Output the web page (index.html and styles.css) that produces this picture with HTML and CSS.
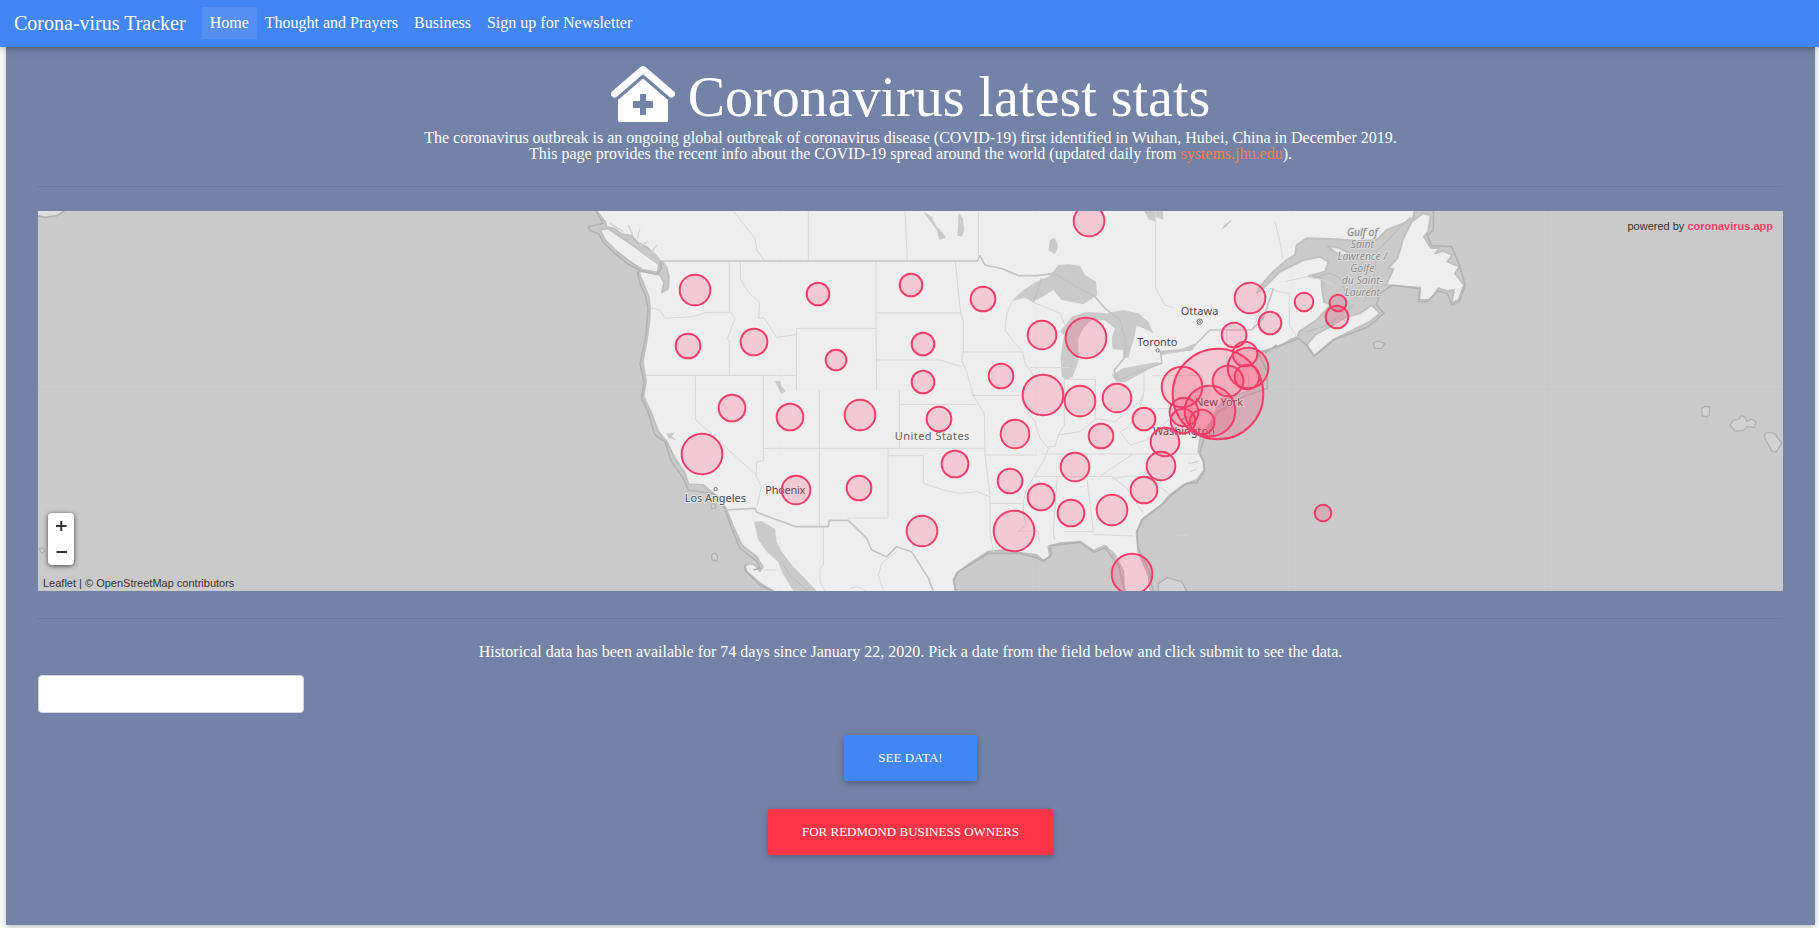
FILE: index.html
```
<!DOCTYPE html>
<html lang="en">
<head>
<meta charset="utf-8">
<title>Corona-virus Tracker</title>
<link rel="stylesheet" href="styles.css">
</head>
<body>
<nav class="navbar">
  <a class="brand">Corona-virus Tracker</a>
  <a class="nav-link active">Home</a>
  <a class="nav-link">Thought and Prayers</a>
  <a class="nav-link">Business</a>
  <a class="nav-link">Sign up for Newsletter</a>
</nav>
<main class="panel">
  <h1 class="title">
    <svg class="house" viewBox="0 0 64 56"><path d="M3.500 28 32 3.500 60.500 28" fill="none" stroke="#fff" stroke-width="7" stroke-linecap="round" stroke-linejoin="round"/><path fill="#fff" fill-rule="evenodd" d="M32 12.500 57 34V54.500Q57 56 55.500 56H8.500Q7 56 7 54.500V34ZM29 28V35H22V42H29V49H35V42H42V35H35V28Z"/></svg>
    <span>Coronavirus latest stats</span>
  </h1>
  <p class="lead">The coronavirus outbreak is an ongoing global outbreak of coronavirus disease (COVID-19) first identified in Wuhan, Hubei, China in December 2019.<br>This page provides the recent info about the COVID-19 spread around the world (updated daily from <a class="source">systems.jhu.edu</a>).</p>
  <hr class="rule">
  <section class="map">
    <svg class="map-canvas" viewBox="-1566 18 5235 1140">
      <g class="land">
        <path d="M95 -10 110 18 135 50 140 66 165 72 185 88 215 92 232 112 262 128 285 150 300 168 318 182 326 215 324 250 306 262 312 232 302 212 290 206 240 198 238 208 252 240 266 275 270 310 268 350 258 420 248 470 258 530 250 575 272 620 295 680 320 710 345 760 375 805 385 838 430 840 455 862 480 880 500 915 520 965 545 1020 590 1055 608 1085 600 1098 585 1080 568 1075 553 1083 560 1100 600 1135 640 1158V1190H1188L1183 1130 1190 1105 1230 1075 1285 1040 1330 1035 1390 1045 1430 1050 1450 1067 1470 1055 1465 1025 1500 1015 1560 1010 1600 1037 1635 1022 1665 1050 1690 1100 1692 1190H1775L1765 1110 1735 1040 1730 985 1745 945 1800 905 1830 870 1870 840 1910 825 1933 795 1930 770 1915 740 1920 700 1960 640 1970 610 2000 580 2060 560 2110 535 2085 490 2100 440 2150 430 2190 405 2213 395 2218 380 2270 345 2312 300 2292 290 2286 250 2285 220 2245 214 2295 200 2306 170 2280 155 2230 165 2160 200 2110 250 2092 262 2100 245 2135 205 2180 165 2205 150 2210 120 2240 100 2310 102 2400 108 2450 105 2480 75 2530 55 2560 38 2568 -10Z"/>
        <path d="M120 75 145 70 185 98 225 125 265 155 298 178 292 203 250 195 210 170 165 135 135 105Z"/>
        <path d="M2240 420 2265 390 2310 365 2360 335 2400 325 2435 300 2460 325 2430 350 2380 375 2320 405 2262 452ZM2302 122 2335 128 2380 150 2395 165 2365 160 2325 142Z"/>
        <path d="M2325 306 2345 315 2370 312 2380 300 2365 318 2340 322Z"/>
        <path d="M2555 50 2588 25 2612 30 2605 80 2592 95 2612 128 2640 130 2625 145 2650 138 2678 150 2662 170 2698 185 2685 205 2712 240 2695 285 2675 295 2682 255 2662 258 2635 250 2610 285 2578 285 2580 248 2510 243 2478 240 2500 192 2485 190 2512 160 2530 100Z"/>
        <path class="isle" d="M2440 415 2455 408 2475 415 2465 430 2445 430ZM3425 610 3435 604 3449 606 3448 630 3440 636 3426 632ZM3510 660 3520 645 3535 643 3545 632 3555 637 3560 650 3575 642 3588 652 3582 668 3562 664 3550 677 3525 678ZM3615 685 3630 682 3645 686 3665 715 3648 742 3635 738 3614 698ZM455 1050 465 1044 473 1055 470 1068 456 1064ZM1795 1168V1135L1822 1118 1865 1130 1885 1168ZM453 895 465 898 467 910 455 910ZM-1562 1032 -1552 1028 -1546 1038 -1554 1045ZM-1510 1052 -1498 1042 -1492 1048 -1504 1062Z"/>
        <path class="plain" d="M-1580 0V30L-1545 37-1510 32-1480 14V0Z"/>
      </g>
      <g class="water">
        <path d="M582 950 605 948 645 972 650 1010 665 1040 700 1085 730 1115 770 1158H700L668 1105 655 1072 620 1040 595 1005ZM645 528 660 528 665 545 678 558 665 567 655 550ZM385 838 425 840 430 860 395 865ZM1090 20 1115 35 1130 65 1142 75 1158 98 1138 104 1130 75 1110 48ZM1195 22 1208 40 1213 75 1205 95 1192 92 1195 50ZM1470 105 1485 98 1495 125 1485 148 1465 135ZM1355 288 1390 255 1430 230 1470 212 1495 180 1525 178 1560 182 1575 210 1608 230 1612 270 1590 285 1570 298 1540 292 1505 285 1480 255 1440 280 1415 290 1395 278ZM1505 515 1502 460 1512 390 1500 380 1535 335 1580 320 1640 325 1690 315 1735 325 1765 350 1780 385 1750 370 1730 362 1722 400 1705 458 1688 458 1690 435 1658 432 1655 400 1665 370 1632 345 1595 345 1570 370 1555 400 1555 470 1538 515 1520 525ZM1655 510 1690 490 1740 480 1800 470 1790 480 1745 505 1695 532 1670 530ZM1795 440 1870 430 1905 415 1900 435 1835 445 1805 450ZM1748 10 1765 42 1785 50 1790 35 1810 45 1808 10ZM1976 92 1992 60 2018 42 2000 64 1985 75Z"/>
        <path d="M228 112 255 130 280 142 305 172 295 180 258 152 232 130ZM320 685 345 683 335 694 350 705 325 700ZM2215 395 2270 352 2320 320 2350 325 2295 365 2258 385 2240 405Z"/>
        <path class="inlets" d="M150 55 190 80M205 60 218 90M240 70 232 100M265 110 240 122M290 120 275 140M322 190 310 170M1880 990H1850M1885 775 1915 770M1890 800 1910 792M2088 265 2105 245"/>
      </g>
      <g class="shore">
        <path d="M102 10 130 55 85 65 90 76 118 88 130 112 165 145 205 178 245 198 290 208 305 190 300 170M240 200 232 202 240 235 256 270 264 310 258 390 248 440 240 475 252 530 245 580 264 620 285 690 315 710 335 770 370 820 385 855 460 866 495 912 515 970 540 1030 590 1068 600 1090 580 1095M556 1078 555 1095 600 1140 635 1158M1188 1158 1180 1125 1195 1100 1285 1045 1380 1045 1430 1058 1452 1070 1475 1048 1470 1022 1560 1012 1602 1042 1635 1028 1675 1080 1695 1158M1778 1158 1770 1105 1735 1030 1730 980 1750 940 1810 895 1835 870 1880 835 1910 833 1933 800 1932 770 1920 745 1930 705 1975 620 2050 575 2122 550 2122 500 2095 445 2190 410 2215 400 2240 420 2262 455 2320 405 2425 365 2472 325 2450 300 2460 265 2498 240 2580 252 2575 290 2600 290 2635 258 2662 265 2675 300 2698 290 2716 240 2698 180 2675 125 2615 122 2602 92 2620 75V10M2115 445 2150 420"/>
      </g>
      <g class="states">
        <path d="M520 18 570 82 585 100 590 135 612 166M745 18V166M1035 18 1042 166M1255 18V166M1787 18V250L1815 300 1840 308M508 170V320M541 170V220L565 262 599 292 596 340 612 338 650 397 700 390 709 388M270 308 300 315 315 340 395 335 440 322H510L525 340 503 400 508 412V510M258 511H709M709 555V370H948M948 170V370L950 555M950 324H1204M1186 170 1193 240 1203 330 1210 345V440L1205 465 1220 500 1240 572M950 465H1140L1170 475 1205 485M1205 441H1388M406 512V643L590 812M610 512V768L590 770 588 812 604 845 590 910M610 730H1273M778 555V965M1018 555V730M1018 598H1247M984 730V939H862M984 752H1090V835L1150 855 1200 865 1250 860 1290 875V980L1300 1040M1235 571H1380M1388 441 1395 475 1420 510 1405 540 1385 575 1395 610 1425 650 1440 700 1465 730 1450 770 1425 810 1400 850 1390 895V930L1400 960 1375 978H1435L1438 1010M1240 572 1260 605 1273 625 1275 750 1290 870M1273 750H1430M1293 895H1390M1355 290 1340 330 1335 375 1360 410 1390 440M1415 290 1500 325 1515 360M1410 488H1530M1513 523V660L1495 690 1485 725 1460 725M1513 523H1606V640M1495 690 1560 680 1610 640 1665 650 1700 620 1740 590 1752 560V500M1752 611H1925M1445 747H1918M1425 814H1655L1700 850 1750 925M1492 814 1480 980 1485 1005M1580 814 1600 980H1512M1600 988 1720 993M1655 820 1720 812 1765 822 1830 868M1620 814 1655 790 1715 750M1778 512H1925M1752 570 1735 620 1700 670 1680 680 1710 720 1760 705 1840 630M2000 370V480M2078 370 2130 250 2155 260 2188 265V360L2210 395M2175 230 2240 215 2290 225 2320 240M1925 520 1950 560 1930 600 1960 620M1994 510H2066V545M790 965 790 1080 780 1090 780 1130 795 1158M610 1095H650M870 1150 890 1145 920 1158M1010 1040 965 1075 955 1110 970 1158M2145 50 2160 110 2168 160"/>
        <path class="nation" d="M305 168H1252L1260 152 1275 180 1330 192 1375 212 1430 212 1482 205 1540 240 1605 275 1635 310 1680 345 1695 400 1696 455 1663 495 1670 525 1750 495 1805 475 1802 440 1890 435 1950 375H2075L2110 340 2140 250M495 915 585 910 590 922 708 965H805L808 946H865L920 1000 935 1035 980 1055 1010 1025 1055 1040 1105 1120 1120 1158M1420 292 1445 220"/>
        <path class="seaborder" d="M2552 35 2450 140 2440 240 2412 290M2260 220 2310 204 2340 220 2360 270M2240 380 2290 365 2340 335M665 1070 685 1105 705 1125 745 1158"/>
        <path class="seam" d="M-1566 553H3669M1428 18V1158M2194 18V1158M2962 18V1158M660 18V1158"/>
      </g>
      <g class="labels">
        <text x="374" y="892" textLength="184">Los Angeles</text><text x="616" y="867" textLength="120">Phoenix</text><text class="country" x="1004" y="705" textLength="224">United States</text><text x="1732" y="422" textLength="120">Toronto</text><text x="1862" y="331" textLength="113">Ottawa</text><text x="1905" y="602" textLength="144">New York</text><text x="1779" y="691" textLength="186">Washington</text>
        <g class="gulf"><text x="2407" y="92">Gulf of</text><text x="2407" y="128">Saint</text><text x="2407" y="164">Lawrence /</text><text x="2407" y="200">Golfe</text><text x="2407" y="236">du Saint-</text><text x="2407" y="272">Laurent</text></g>
        <circle cx="467" cy="852" r="5"/><circle cx="1793" cy="436" r="5"/><circle cx="1919" cy="350" r="8"/><circle cx="1919" cy="350" r="3"/><circle cx="1873" cy="648" r="8"/>
      </g>
      <g class="cases">
        <circle cx="405" cy="255" r="46"/><circle cx="774" cy="267" r="34"/><circle cx="384" cy="423" r="37"/><circle cx="582" cy="411" r="40"/><circle cx="828" cy="465" r="31"/><circle cx="516" cy="609" r="40"/><circle cx="690" cy="636" r="40"/><circle cx="900" cy="630" r="46"/><circle cx="426" cy="747" r="61"/><circle cx="708" cy="855" r="43"/><circle cx="897" cy="849" r="37"/>
        <circle cx="1587" cy="48" r="46"/><circle cx="1053" cy="240" r="34"/><circle cx="1269" cy="282" r="37"/><circle cx="1089" cy="417" r="34"/><circle cx="1446" cy="390" r="43"/><circle cx="1578" cy="399" r="61"/><circle cx="1089" cy="531" r="34"/><circle cx="1323" cy="513" r="37"/><circle cx="1449" cy="570" r="61"/><circle cx="1560" cy="588" r="46"/><circle cx="1671" cy="579" r="43"/><circle cx="1137" cy="642" r="37"/><circle cx="1365" cy="687" r="43"/><circle cx="1623" cy="693" r="37"/><circle cx="1752" cy="642" r="34"/><circle cx="1185" cy="777" r="40"/><circle cx="1350" cy="828" r="37"/><circle cx="1545" cy="786" r="43"/><circle cx="1443" cy="876" r="40"/><circle cx="1533" cy="924" r="40"/><circle cx="1656" cy="915" r="46"/><circle cx="1752" cy="855" r="40"/><circle cx="1086" cy="978" r="46"/><circle cx="1362" cy="978" r="61"/><circle cx="1716" cy="1107" r="61"/>
        <circle cx="2070" cy="279" r="46"/><circle cx="2130" cy="354" r="34"/><circle cx="2232" cy="291" r="28"/><circle cx="2334" cy="294" r="25"/><circle cx="2331" cy="336" r="34"/><circle cx="2022" cy="390" r="37"/><circle cx="2055" cy="447" r="37"/><circle cx="2064" cy="489" r="61"/><circle cx="2061" cy="516" r="37"/><circle cx="2004" cy="528" r="46"/><circle cx="1974" cy="567" r="136"/><circle cx="1866" cy="546" r="61"/><circle cx="1950" cy="618" r="76"/><circle cx="1872" cy="621" r="43"/><circle cx="1869" cy="648" r="37"/><circle cx="1926" cy="651" r="37"/><circle cx="1815" cy="711" r="43"/><circle cx="1803" cy="783" r="43"/><circle cx="2289" cy="924" r="25"/>
      </g>
    </svg>
    <div class="powered">powered by <b>coronavirus.app</b></div>
    <div class="zoom">
      <svg viewBox="0 0 26 26"><path d="M8 13H18.500M13.250 8V18"/></svg>
      <svg viewBox="0 0 26 26"><path d="M8.500 13H19"/></svg>
    </div>
    <div class="credit">Leaflet | © OpenStreetMap contributors</div>
  </section>
  <hr class="rule lower">
  <p class="history">Historical data has been available for 74 days since January 22, 2020. Pick a date from the field below and click submit to see the data.</p>
  <input class="date" type="text" aria-label="Date">
  <div class="actions">
    <button class="btn">SEE DATA!</button>
    <button class="btn danger">FOR REDMOND BUSINESS OWNERS</button>
  </div>
</main>
</body>
</html>
```
FILE: styles.css
```
* { box-sizing: border-box; }
body { margin: 0; height: 928px; overflow: hidden; background: #fff; color: #fff; font: 16px "Liberation Serif", "Times New Roman", serif; }
.navbar { position: relative; z-index: 2; display: flex; align-items: center; height: 47px; padding: 0 14px; background: #4285f4; box-shadow: 0 2px 5px rgba(0,0,0,.16), 0 2px 10px rgba(0,0,0,.12); }
.brand { font-size: 20px; margin-right: 16px; }
.nav-link { height: 32px; padding: 0 8px; line-height: 31px; margin-bottom: 1px; }
.nav-link.active { background: rgba(255,255,255,.1); }
.panel { height: 878px; margin: 0 4px 0 6px; padding: 18px 32px 0; background: #7283a7; box-shadow: 0 2px 5px rgba(0,0,0,.16), 0 2px 10px rgba(0,0,0,.12); }
.title { display: flex; justify-content: center; gap: 13px; height: 63px; margin: 0; font-size: 56px; font-weight: 400; line-height: 64px; white-space: nowrap; }
.house { width: 64px; height: 56px; margin-top: 1px; }
.lead { margin: 2px 0 0; line-height: 16px; text-align: center; }
.source { color: #ff7f50; }
.rule { height: 1px; margin: 24px 0; border: 0; background: #68799b; }
.rule.lower { margin-top: 27px; }
.map { position: relative; height: 380px; overflow: hidden; background: #cacaca; color: #333; font-family: "Liberation Sans", Arial, sans-serif; }
.map-canvas { display: block; width: 1745px; height: 380px; }
.land path { fill: #eee; stroke: #c0c0c0; stroke-width: 6; stroke-linejoin: round; }
.land .isle { fill: #d2d2d2; stroke: #b0b0b0; stroke-width: 4; }
.land .plain { fill: #dedede; stroke: #b2b2b2; stroke-width: 5; }
.water path { fill: #cacaca; }
.water .inlets { fill: none; stroke: #d2d2d2; stroke-width: 4; }
.shore path { fill: none; stroke: #b2b2b2; stroke-width: 5; stroke-linejoin: round; }
.states path { fill: none; stroke: #d7d7d7; stroke-width: 3; stroke-linejoin: round; }
.states .nation { stroke: #c3c3c3; stroke-width: 5; }
.states .seaborder { stroke: #b9b9b9; }
.states .seam { stroke: #000; stroke-opacity: .015; }
.labels text { fill: #4c4c4c; stroke: #eee; stroke-width: 5; paint-order: stroke; font: 33px "Noto Sans", sans-serif; }
.labels .country { fill: #666; }
.labels .gulf text { fill: #8c8c8c; stroke: #ddd; font-size: 31px; font-style: italic; text-anchor: middle; }
.labels circle { fill: #eee; stroke: #777; stroke-width: 3; }
.cases circle { fill: #ff3d6a; fill-opacity: .2; stroke: #ff3d6a; stroke-width: 6; }
.powered { position: absolute; top: 8px; right: 10px; font-size: 11px; line-height: 14px; }
.powered b { color: #ff3d6a; }
.zoom { position: absolute; left: 10px; top: 302px; display: grid; grid-template-rows: 26px 26px; width: 26px; border-radius: 4px; background: #fff; box-shadow: 0 1px 5px rgba(0,0,0,.65); }
.zoom svg { width: 26px; height: 26px; fill: none; stroke: #333; stroke-width: 2; }
.credit { position: absolute; left: 5px; bottom: 0; font-size: 11px; line-height: 16px; }
.history { margin: 0; line-height: 18px; text-align: center; }
.date { display: block; width: 266px; height: 38px; margin: 14px 0 22px; border: 1px solid #ced4da; border-radius: 4px; background: #fff; }
.actions { display: flex; flex-direction: column; align-items: center; gap: 28px; }
.btn { height: 46px; padding: 0 34px; border: 0; border-radius: 2px; background: #4285f4; color: #fff; font: 13px "Liberation Serif", serif; box-shadow: 0 2px 5px rgba(0,0,0,.16), 0 2px 10px rgba(0,0,0,.12); }
.btn.danger { background: #ff3547; }
```
